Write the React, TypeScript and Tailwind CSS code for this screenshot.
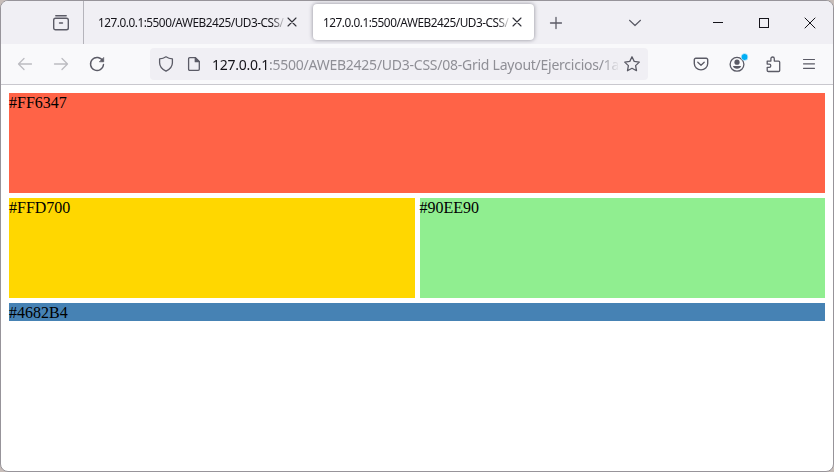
import type { ReactNode } from "react";

function Icon({ children, className = "" }: { children: ReactNode; className?: string }) {
  return (
    <svg
      viewBox="0 0 16 16"
      fill="none"
      stroke="currentColor"
      strokeWidth="1.3"
      strokeLinecap="round"
      strokeLinejoin="round"
      className={`block size-4 shrink-0 overflow-visible ${className}`}
    >
      {children}
    </svg>
  );
}

function TabContent() {
  return (
    <>
      <span className="w-[186px] shrink-0 whitespace-nowrap text-[11.8px] leading-4 tracking-[-0.48px] text-[#15141a] [mask-image:linear-gradient(to_right,black_174px,transparent_188px)]">
        127.0.0.1:5500/AWEB2425/UD3-CSS/
      </span>
      <Icon className="text-[#303038]">
        <path d="M4 4l8 8M12 4l-8 8" strokeWidth="1.1" />
      </Icon>
    </>
  );
}

function TabStrip() {
  return (
    <header className="flex h-[43px] shrink-0 items-center bg-[#f0eff4] text-[#5b5b66]">
      <div className="flex h-full w-[83px] shrink-0 items-center border-r border-[#b5b4bb] pl-[52px]">
        <Icon>
          <path d="M2.8 .7h10.4" strokeWidth="1.4" />
          <rect x=".7" y="3.2" width="14.6" height="11.6" rx="1.8" strokeWidth="1.4" />
          <path d="M6.5 8h3" strokeWidth="1.4" />
        </Icon>
      </div>
      <div className="flex h-full w-[229px] shrink-0 items-center pb-px pl-[14px]">
        <TabContent />
      </div>
      <div className="mb-px flex h-9 w-[221px] shrink-0 items-center rounded bg-white pl-[10px] shadow-[0_0_4px_rgba(60,60,75,0.55)]">
        <TabContent />
      </div>
      <div className="ml-[14px] flex">
        <Icon>
          <path d="M8 2.5v11M2.5 8h11" strokeWidth="1.3" />
        </Icon>
      </div>
      <Icon className="ml-[63px]">
        <path d="M2.5 5.3L8 10.5l5.5-5.2" strokeWidth="1.2" />
      </Icon>
      <div className="ml-[67px] flex gap-[30px] text-[#15141a]">
        <Icon>
          <path d="M3 7.5h10" strokeWidth="1" strokeLinecap="butt" />
        </Icon>
        <Icon>
          <rect x="3.5" y="3.5" width="9" height="9" strokeWidth="1" strokeLinejoin="miter" />
        </Icon>
        <Icon>
          <path d="M3 3l10 10M13 3L3 13" strokeWidth="1" />
        </Icon>
      </div>
    </header>
  );
}

function AddressBar() {
  return (
    <div className="ml-[45px] flex h-8 w-[498px] shrink-0 items-center rounded bg-[#f0eff4] pl-2">
      <Icon>
        <path d="M8 .8c2 1.4 4.2 2 6.4 2.1v3.8c0 4.2-3 6.8-6.4 8.5-3.400-1.700-6.400-4.300-6.400-8.500V2.900C3.800 2.800 6 2.200 8 .8z" />
      </Icon>
      <Icon className="ml-3">
        <path d="M3.700 1.700h5.600l4 4v7.500a1.100 1.100 0 0 1-1.100 1.100H3.700a1.100 1.100 0 0 1-1.100-1.100V2.800a1.100 1.100 0 0 1 1.100-1.100z" />
        <path d="M9.300 1.700v4h4z" fill="currentColor" />
      </Icon>
      <span className="ml-[10px] w-[406px] shrink-0 whitespace-nowrap pt-0.5 text-[14px] leading-5 tracking-[-0.25px] text-[#8f8f96] [mask-image:linear-gradient(to_right,black_390px,transparent_408px)]">
        <span className="text-[#15141a]">127.0.0.1</span>
        :5500/AWEB2425/UD3-CSS/08-Grid Layout/Ejercicios/1a
      </span>
      <Icon className="ml-[6px]">
        <path d="M8 .8l2.200 4.600 5.100.7-3.700 3.500.9 5.100L8 12.300l-4.500 2.400.9-5.100L.7 6.100l5.100-.7z" />
      </Icon>
    </div>
  );
}

function Toolbar() {
  return (
    <nav className="flex h-[41px] shrink-0 items-center border-b border-[#c9c8ce] bg-[#f9f9fb] pl-4 text-[#5b5b66]">
      <Icon className="text-[#bcbcc1]">
        <path d="M14.500 8H1.500M7 2.500L1.500 8 7 13.500" />
      </Icon>
      <Icon className="ml-5 text-[#bcbcc1]">
        <path d="M1.500 8h13M9 2.500L14.500 8 9 13.500" />
      </Icon>
      <Icon className="ml-5">
        <path d="M13.800 5A6.500 6.500 0 1 0 14.500 8.500" strokeWidth="1.400" />
        <path d="M14.700 1.800v4h-4z" fill="currentColor" strokeWidth=".7" />
      </Icon>
      <AddressBar />
      <div className="ml-[45px] flex gap-5">
        <Icon>
          <path d="M2.800 2.200h10.400a1.500 1.500 0 0 1 1.500 1.500v3.900a6.700 6.300 0 0 1-13.400 0V3.700a1.500 1.500 0 0 1 1.500-1.500z" strokeWidth="1.400" />
          <path d="M4.800 6.200L8 9.200l3.200-3" />
        </Icon>
        <Icon>
          <circle cx="8" cy="8.300" r="6.900" />
          <circle cx="8" cy="6.200" r="2.600" fill="currentColor" stroke="none" />
          <path d="M3.900 10h8.200c-.5 1.800-2.100 2.700-4.100 2.700S4.400 11.800 3.900 10z" fill="currentColor" stroke="none" />
          <circle cx="15.600" cy="1" r="3.500" fill="#00aef5" stroke="#f9f9fb" strokeWidth=".6" />
        </Icon>
        <Icon>
          <path d="M2.200 5.100h3.700V2.700a1.700 1.700 0 0 1 3.400 0v2.400h4.300a1.100 1.100 0 0 1 1.100 1.100v8.200a1.100 1.100 0 0 1-1.100 1.100H3.300a1.100 1.100 0 0 1-1.100-1.100v-3.100h2a1.500 1.500 0 0 0 0-3.200h-2z" />
        </Icon>
        <Icon>
          <path d="M2.500 3.500h11M2.500 7.800h11M2.500 12.300h11" strokeWidth="1.200" />
        </Icon>
      </div>
    </nav>
  );
}

export default function App() {
  return (
    <div className="h-[472px] w-[834px] overflow-hidden bg-[#c7bdb9] font-['Noto_Sans','Open_Sans',sans-serif]">
      <div className="flex h-full flex-col overflow-hidden rounded-lg border border-[#97949a] bg-white">
        <TabStrip />
        <Toolbar />
        <main className="m-2 grid grid-cols-2 grid-rows-[100px_100px_18px] gap-[5px] font-['Liberation_Serif','Times_New_Roman',serif] text-base leading-5 text-black">
          <div className="col-span-2 bg-[#ff6347]">#FF6347</div>
          <div className="bg-[#ffd700]">#FFD700</div>
          <div className="bg-[#90ee90]">#90EE90</div>
          <div className="col-span-2 bg-[#4682b4]">#4682B4</div>
        </main>
      </div>
    </div>
  );
}
